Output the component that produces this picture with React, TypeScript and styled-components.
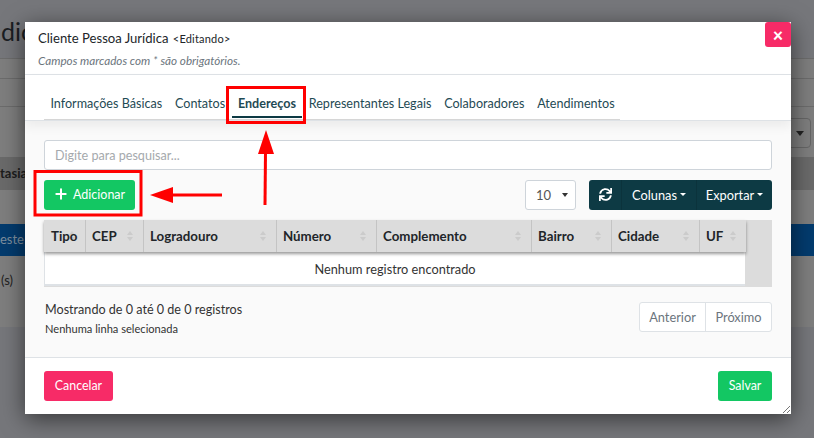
import React from "react";
import styled, { createGlobalStyle } from "styled-components";
import { FaSync } from "react-icons/fa";
import { FiPlus } from "react-icons/fi";

const FONT = `"Lato", "Open Sans", sans-serif`;

const Global = createGlobalStyle`
  html, body { margin: 0; padding: 0; width: 814px; height: 438px; overflow: hidden; background: #76777b; }
  * { box-sizing: border-box; }
  body { font-family: ${FONT}; font-size: 13px; color: #333; }
`;

const Page = styled.div`
  position: relative;
  width: 814px;
  height: 438px;
  overflow: hidden;
  background: #76777b;
`;

const Heading = styled.div`
  height: 58px;
  padding: 13px 0 0 1px;
  font-size: 25px;
  line-height: 36px;
  color: #1b1d22;
`;

const BackCard = styled.div`
  height: 269px;
  background: #7e7e7e;
  display: flex;
  flex-direction: column;
`;

const BackLine = styled.div<{ $h: number }>`
  height: ${(p) => p.$h}px;
  border-top: 1px solid #6c6c6c;
`;

const BackFilter = styled.div`
  height: 51px;
  border-top: 1px solid #6c6c6c;
  padding-top: 11px;
  display: flex;
  justify-content: flex-end;
  padding-right: 3px;
`;

const BackSelect = styled.div`
  width: 40px;
  height: 30px;
  border: 1px solid #666;
  border-radius: 4px;
  display: flex;
  align-items: center;
  justify-content: flex-end;
  padding-right: 6px;
  &::after {
    content: "";
    border: 4px solid transparent;
    border-top: 5px solid #222;
    border-bottom: 0;
  }
`;

const BackHead = styled.div`
  height: 33px;
  background: #6a6a6a;
  font-size: 13px;
  font-weight: 700;
  line-height: 33px;
  color: #1d1d1d;
  margin-bottom: 34px;
`;

const BackRow = styled.div`
  height: 32px;
  background: #033b6e;
  color: #7e8f9e;
  line-height: 31px;
  font-size: 13px;
`;

const BackFoot = styled.div`
  padding: 9px 0 0 1px;
  line-height: 30px;
  color: #222;
`;

const Modal = styled.div`
  position: absolute;
  left: 25px;
  top: 22px;
  width: 766px;
  height: 392px;
  background: #fff;
  box-shadow: 0 5px 22px rgba(0, 0, 0, 0.55);
  display: flex;
  flex-direction: column;
`;

const Close = styled.button`
  position: absolute;
  right: 0;
  top: 0;
  width: 26px;
  height: 25px;
  border: 0;
  padding: 0;
  border-radius: 3px;
  background: #f72b67;
  color: #fff;
  font-family: ${FONT};
  font-size: 18px;
  font-weight: 900;
  line-height: 24px;
`;

const Header = styled.div`
  height: 53px;
  padding: 7px 13px;
  border-bottom: 1px solid #dee2e6;
`;

const Title = styled.div`
  font-size: 13.1px;
  line-height: 18px;
  color: #212529;
`;

const Editing = styled.span`
  font-size: 11px;
  margin-left: 1px;
  letter-spacing: 0.2px;
`;

const Sub = styled.div`
  font-size: 11.7px;
  line-height: 14px;
  margin-top: 5px;
  font-style: italic;
  color: #6c757d;
`;

const TabArea = styled.div`
  height: 46px;
  padding: 0 0 0 19px;
  display: flex;
  align-items: flex-end;
  border-bottom: 1px solid #dee2e6;
  position: relative;
  z-index: 1;
  box-shadow: 0 6px 10px rgba(0, 0, 0, 0.06);
  background: #fff;
`;

const TabList = styled.div`
  display: flex;
  width: 576px;
  height: 45px;
  border-bottom: 1px solid #d6d6d6;
`;

const Tab = styled.div<{ $active?: boolean }>`
  height: 44px;
  padding: 20px 6.4px 0;
  font-size: 12.6px;
  line-height: 18px;
  white-space: nowrap;
  color: #1f4a54;
  font-weight: ${(p) => (p.$active ? 700 : 400)};
  position: relative;
  &::after {
    content: "";
    display: ${(p) => (p.$active ? "block" : "none")};
    position: absolute;
    left: 0;
    right: 0;
    bottom: 1px;
    height: 2px;
    background: #0d3a44;
  }
`;

const Body = styled.div`
  flex: 1;
  background: #fafafa;
  padding: 19px 19px 0;
  display: flex;
  flex-direction: column;
`;

const Search = styled.div`
  height: 30px;
  border: 1px solid #ced4da;
  border-radius: 3px;
  background: #fff;
  padding: 0 10px;
  font-size: 12.6px;
  line-height: 29px;
  color: #a5a9ad;
`;

const Toolbar = styled.div`
  margin-top: 10px;
  height: 30px;
  display: flex;
  align-items: stretch;
`;

const Add = styled.button`
  width: 91px;
  border: 0;
  border-radius: 3px;
  background: #13c763;
  color: #fff;
  font-family: ${FONT};
  font-size: 12.5px;
  padding: 0 0 2px 9px;
  display: flex;
  align-items: center;
  gap: 4px;
`;

const PerPage = styled.div`
  margin-left: auto;
  width: 51px;
  border: 1px solid #ced4da;
  border-radius: 3px;
  background: #fff;
  display: flex;
  align-items: center;
  justify-content: space-between;
  padding: 0 7px 0 10px;
  font-size: 13px;
  color: #555;
  &::after {
    content: "";
    border: 3px solid transparent;
    border-top: 4px solid #333;
    border-bottom: 0;
  }
`;

const Group = styled.div`
  margin-left: 13px;
  width: 183px;
  display: flex;
  border-radius: 3px;
  background: #0d3a44;
  color: #fff;
  overflow: hidden;
`;

const GroupBtn = styled.div<{ $w: number }>`
  width: ${(p) => p.$w}px;
  display: flex;
  align-items: center;
  justify-content: center;
  gap: 3px;
  font-size: 12.8px;
  padding-bottom: 1px;
  & + & { border-left: 1px solid #0b333c; }
`;

const Caret = styled.span`
  width: 0;
  height: 0;
  border: 3px solid transparent;
  border-top: 3px solid #fff;
  border-bottom: 0;
`;

const TableWrap = styled.div`
  margin-top: 10px;
  height: 67px;
  background: #dcdcdc;
  display: flex;
  flex-direction: column;
  align-items: flex-start;
`;

const HeadRow = styled.div`
  display: flex;
  height: 32px;
  width: 702px;
  background: #dcdcdc;
  box-shadow: 0 2px 3px rgba(0, 0, 0, 0.4);
  position: relative;
  z-index: 1;
`;

const Th = styled.div<{ $w: number }>`
  position: relative;
  width: ${(p) => p.$w}px;
  padding-left: 6px;
  font-size: 13.3px;
  font-weight: 700;
  line-height: 33px;
  color: #212529;
  border-left: 1px solid #c4c4c4;
  &:first-child { border-left: 0; padding-left: 7px; }
`;

const ThLabel = styled.span`
  position: relative;
  z-index: 1;
`;

const Sort = styled.span`
  position: absolute;
  right: 10px;
  top: 11px;
  display: flex;
  flex-direction: column;
  gap: 2px;
  &::before, &::after {
    content: "";
    border: 3px solid transparent;
    border-bottom: 4px solid #cbcbcb;
    border-top: 0;
  }
  &::after {
    border-top: 4px solid #cbcbcb;
    border-bottom: 0;
  }
`;

const Empty = styled.div`
  width: 701px;
  height: 34px;
  background: #fff;
  border-left: 1px solid #dee2e6;
  border-bottom: 2px solid #dee2e6;
  text-align: center;
  font-size: 12.75px;
  line-height: 34px;
  color: #333;
`;

const InfoRow = styled.div`
  margin-top: 15px;
  display: flex;
  justify-content: space-between;
`;

const Info = styled.div`
  color: #333;
  padding-left: 1px;
`;

const InfoMain = styled.div`
  font-size: 12.6px;
  line-height: 16px;
`;

const InfoSmall = styled.div`
  margin-top: 4px;
  font-size: 11.1px;
  line-height: 14px;
`;

const Pager = styled.div`
  display: flex;
  height: 30px;
  border: 1px solid #dee2e6;
  border-radius: 3px;
  background: #fff;
`;

const PageBtn = styled.div<{ $w: number }>`
  width: ${(p) => p.$w}px;
  text-align: center;
  font-size: 12.8px;
  line-height: 29px;
  color: #6c757d;
  & + & { border-left: 1px solid #dee2e6; }
`;

const Footer = styled.div`
  height: 57px;
  border-top: 1px solid #dee2e6;
  padding: 13px 19px 0;
  display: flex;
  justify-content: space-between;
  background: #fff;
`;

const FootBtn = styled.button<{ $bg: string; $w: number }>`
  width: ${(p) => p.$w}px;
  height: 30px;
  border: 0;
  padding: 0 0 1px;
  border-radius: 3px;
  background: ${(p) => p.$bg};
  color: #fff;
  font-family: ${FONT};
  font-size: 12.4px;
`;

const Grip = styled.svg`
  position: absolute;
  right: 0;
  bottom: 0;
`;

const Notes = styled.svg`
  position: absolute;
  left: 0;
  top: 0;
  pointer-events: none;
  z-index: 5;
`;

const cols: [string, number][] = [
  ["Tipo", 41],
  ["CEP", 58],
  ["Logradouro", 133],
  ["Número", 100],
  ["Complemento", 155],
  ["Bairro", 80],
  ["Cidade", 88],
  ["UF", 47],
];

const tabs = ["Informações Básicas", "Contatos", "Endereços", "Representantes Legais", "Colaboradores", "Atendimentos"];

export default function App() {
  return (
    <Page>
      <Global />
      <Heading>dic</Heading>
      <BackCard>
        <BackLine $h={20} />
        <BackLine $h={28} />
        <BackFilter>
          <BackSelect />
        </BackFilter>
        <BackHead>tasia</BackHead>
        <BackRow>este</BackRow>
        <BackFoot>(s)</BackFoot>
      </BackCard>

      <Modal>
        <Close>×</Close>
        <Header>
          <Title>
            Cliente Pessoa Jurídica <Editing>&lt;Editando&gt;</Editing>
          </Title>
          <Sub>Campos marcados com * são obrigatórios.</Sub>
        </Header>
        <TabArea>
          <TabList>
            {tabs.map((t) => (
              <Tab key={t} $active={t === "Endereços"}>{t}</Tab>
            ))}
          </TabList>
        </TabArea>
        <Body>
          <Search>Digite para pesquisar...</Search>
          <Toolbar>
            <Add>
              <FiPlus size={16} strokeWidth={3} />
              Adicionar
            </Add>
            <PerPage>10</PerPage>
            <Group>
              <GroupBtn $w={32}>
                <FaSync size={13} />
              </GroupBtn>
              <GroupBtn $w={75}>
                Colunas<Caret />
              </GroupBtn>
              <GroupBtn $w={76}>
                Exportar<Caret />
              </GroupBtn>
            </Group>
          </Toolbar>
          <TableWrap>
            <HeadRow>
              {cols.map(([c, w]) => (
                <Th key={c} $w={w}>
                  <ThLabel>{c}</ThLabel>
                  <Sort />
                </Th>
              ))}
            </HeadRow>
            <Empty>Nenhum registro encontrado</Empty>
          </TableWrap>
          <InfoRow>
            <Info>
              <InfoMain>Mostrando de 0 até 0 de 0 registros</InfoMain>
              <InfoSmall>Nenhuma linha selecionada</InfoSmall>
            </Info>
            <Pager>
              <PageBtn $w={65}>Anterior</PageBtn>
              <PageBtn $w={66}>Próximo</PageBtn>
            </Pager>
          </InfoRow>
        </Body>
        <Footer>
          <FootBtn $bg="#f72b67" $w={69}>Cancelar</FootBtn>
          <FootBtn $bg="#13c763" $w={54}>Salvar</FootBtn>
        </Footer>
        <Grip width="9" height="9" viewBox="0 0 9 9">
          <path d="M1 8 L8 1 M5 8 L8 5" stroke="#777" strokeWidth="1" />
        </Grip>
      </Modal>

      <Notes width="814" height="438" viewBox="0 0 814 438">
        <rect x="227.5" y="87.5" width="77" height="35" fill="none" stroke="#f00" strokeWidth="3" />
        <rect x="35" y="171.5" width="106" height="43.5" fill="none" stroke="#f00" strokeWidth="3" />
        <path d="M266 130 L274 154 L258 154 Z" fill="#f00" />
        <path d="M265.5 152 L265 205" stroke="#f00" strokeWidth="3" />
        <path d="M150 195 L173 187 L173 203 Z" fill="#f00" />
        <path d="M171 195 L222 195" stroke="#f00" strokeWidth="3" />
      </Notes>
    </Page>
  );
}
